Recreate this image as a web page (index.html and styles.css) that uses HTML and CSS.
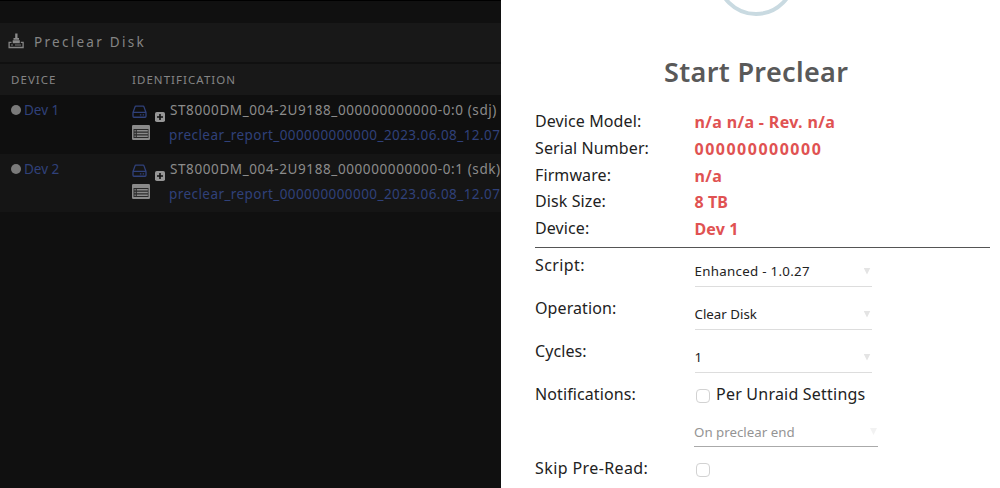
FILE: index.html
```html
<!DOCTYPE html>
<html lang="en">
<head>
<meta charset="utf-8">
<title>Preclear Disk</title>
<link rel="stylesheet" href="styles.css">
</head>
<body>
<svg class="defs" width="0" height="0">
  <symbol id="drive" viewBox="0 0 16 14"><path d="M4.200 1.200h7.600a1 1 0 0 1 1 .8L15 8v4.200a1 1 0 0 1-1 1H2a1 1 0 0 1-1-1V8L3.200 2a1 1 0 0 1 1-.8zM1 8h14" fill="none" stroke="currentColor" stroke-width="1.400" stroke-linejoin="round"/><path d="M8.400 10h1.600v1.300H8.400zM11.400 10H13v1.300h-1.600z" fill="currentColor"/></symbol>
  <symbol id="list" viewBox="0 0 18 15"><rect width="18" height="15" rx="1.200" fill="#8a8a8a"/><path d="M1.500 4h15v9h-15z" fill="#2a2a2a"/><path d="M2.500 5h1.200v1.400H2.500zM2.500 7.800h1.200v1.400H2.500zM2.500 10.600h1.200V12H2.500zM4.800 5h11v1.400h-11zM4.800 7.800h11v1.400h-11zM4.800 10.600h11V12h-11z" fill="#8a8a8a"/></symbol>
  <symbol id="plus" viewBox="0 0 10 10"><rect width="10" height="10" rx="1.800" fill="#969696"/><path d="M5 2v6M2 5h6" stroke="#111" stroke-width="1.600"/></symbol>
</svg>
<div class="page">
  <section class="disks">
    <h1 class="title">
      <svg class="title-icon" viewBox="0 0 16 16"><path d="M7.200.5h2.300v4.500H7.200zM5.500 5h5.500v1.800H5.500zM4.700 7.300h7.100v3H4.700z" fill="#8a8a8a"/><path d="M3.500 9.300H1.100v5.200h14V9.300h-2.300" fill="none" stroke="#858585" stroke-width="1.300"/><path d="M3 12h2M7 12h6" stroke="#777"/></svg>
      <span class="title-text">Preclear Disk</span>
    </h1>
    <div class="head"><span class="head-device">DEVICE</span><span class="head-id">IDENTIFICATION</span></div>
    <div class="disk">
      <div class="device"><i class="dot"></i><a class="dev-link">Dev 1</a></div>
      <div class="ident">
        <div class="line"><svg class="drive"><use href="#drive"/></svg><svg class="plus"><use href="#plus"/></svg><span class="serial">ST8000DM_004-2U9188_000000000000-0:0 (sdj)</span></div>
        <div class="line report-line"><svg class="list"><use href="#list"/></svg><a class="report">preclear_report_000000000000_2023.06.08_12.07</a></div>
      </div>
    </div>
    <div class="disk alt">
      <div class="device"><i class="dot"></i><a class="dev-link">Dev 2</a></div>
      <div class="ident">
        <div class="line"><svg class="drive"><use href="#drive"/></svg><svg class="plus"><use href="#plus"/></svg><span class="serial">ST8000DM_004-2U9188_000000000000-0:1 (sdk)</span></div>
        <div class="line report-line"><svg class="list"><use href="#list"/></svg><a class="report">preclear_report_000000000000_2023.06.08_12.07</a></div>
      </div>
    </div>
  </section>
  <section class="dialog">
    <svg class="ring" viewBox="0 0 84 16"><circle cx="42" cy="-24" r="38" fill="none" stroke="#c9dae1" stroke-width="4"/></svg>
    <h2 class="heading">Start Preclear</h2>
    <dl class="facts">
      <dt class="label">Device Model:</dt><dd class="fact">n/a n/a - Rev. n/a</dd>
      <dt class="label">Serial Number:</dt><dd class="fact fact-serial">000000000000</dd>
      <dt class="label">Firmware:</dt><dd class="fact">n/a</dd>
      <dt class="label">Disk Size:</dt><dd class="fact fact-short">8 TB</dd>
      <dt class="label">Device:</dt><dd class="fact fact-short">Dev 1</dd>
    </dl>
    <div class="form">
      <div class="field"><span class="label label-wide">Script:</span><div class="select"><span class="value value-script">Enhanced - 1.0.27</span><i class="arrow"></i></div></div>
      <div class="field"><span class="label">Operation:</span><div class="select"><span class="value">Clear Disk</span><i class="arrow"></i></div></div>
      <div class="field"><span class="label">Cycles:</span><div class="select"><span class="value">1</span><i class="arrow"></i></div></div>
      <div class="check-row"><span class="label">Notifications:</span><i class="box"></i><span class="label check-text">Per Unraid Settings</span></div>
      <div class="select disabled"><span class="value">On preclear end</span><i class="arrow"></i></div>
      <div class="check-row skip"><span class="label label-wide">Skip Pre-Read:</span><i class="box"></i></div>
    </div>
  </section>
</div>
</body>
</html>
```
FILE: styles.css
```css
* { box-sizing: border-box; }
body { margin: 0; font-family: "Noto Sans", sans-serif; background: #fff; }
.defs { position: absolute; }
.page { display: flex; width: 1000px; height: 488px; overflow: hidden; }
.disks { width: 501px; height: 488px; background: #101010; border-top: 1px solid #000; padding-top: 22px; overflow: hidden; white-space: nowrap; flex: none; }
.title { margin: 0; height: 39px; background: #181818; display: flex; align-items: center; padding: 0 0 2px 8px; color: #858585; font-size: 13.5px; font-weight: 400; letter-spacing: 2.28px; }
.title-icon { width: 16px; height: 16px; margin: -1px 10px 0 0; }
.head { height: 33px; border-top: 2px solid #101010; background: #181818; display: flex; align-items: center; padding: 0 0 1px 11px; font-size: 11.5px; letter-spacing: 1.05px; color: #858585; }
.head-device { width: 121px; }
.disk { height: 59px; background: #0f0f0f; display: flex; font-size: 13.5px; }
.disk.alt { height: 58px; background: #151515; }
.disk.alt .line:first-child, .disk.alt .device { height: 29px; }
.disk.alt .report-line { height: 22px; }
.device { width: 132px; height: 30px; padding-left: 11px; display: flex; align-items: center; gap: 3px; }
.dot { width: 10px; height: 10px; border-radius: 50%; background: #7a7a7a; }
.dev-link, .report { color: #30417a; }
.report { letter-spacing: 0.43px; }
.line { height: 30px; display: flex; align-items: center; }
.report-line { height: 20px; }
.drive { width: 15px; height: 13px; color: #30417a; margin: 3px 8px 0 0; }
.plus { width: 10px; height: 10px; margin: 14px 5px 0 0; }
.serial { color: #8c8c8c; letter-spacing: 0.6px; }
.list { width: 18px; height: 15px; margin: -5px 19px 0 0; }

.dialog { width: 499px; height: 488px; background: #fff; color: #222; overflow: hidden; padding: 0 10px 0 34px; }
.ring { display: block; width: 84px; height: 16px; margin-left: 179px; }
.heading { margin: 33px 0 0; height: 46px; line-height: 46px; padding-left: 129px; font-size: 27px; font-weight: 600; letter-spacing: 0.35px; color: #595959; }
.facts { margin: 13px 0 0; padding-bottom: 1px; display: grid; grid-template-columns: 159.5px 1fr; grid-auto-rows: 26.8px; height: 140px; border-bottom: 1.500px solid #555; align-items: start; }
.label { font-size: 16px; line-height: 26px; white-space: nowrap; letter-spacing: 0.1px; }
.label-wide { letter-spacing: 0.4px; }
.fact { margin: 1px 0 0; font-size: 16px; line-height: 26px; font-weight: 700; color: #e05252; white-space: nowrap; letter-spacing: 0.35px; }
.fact-serial { letter-spacing: 1.5px; }
.fact-short { letter-spacing: 0.1px; }
.form { padding-top: 4px; }
.field { height: 43px; display: grid; grid-template-columns: 159.5px 177px; align-items: start; }
.select { height: 35px; border-bottom: 1px solid #ddd; display: flex; align-items: center; justify-content: space-between; padding-top: 4px; }
.value { font-size: 13.3px; }
.value-script { letter-spacing: 0.3px; }
.arrow { width: 7px; height: 7px; background: #e4e4e4; clip-path: polygon(0 0, 100% 0, 50% 100%); margin-right: 1px; }
.check-row { height: 26px; display: grid; grid-template-columns: 160px 21px 1fr; align-items: center; }
.box { width: 14px; height: 14px; margin: 3px 0 0 1px; border: 1px solid #d2d2d2; border-radius: 4px; background: #fff; }
.check-text { letter-spacing: 0.22px; }
.disabled { width: 184px; height: 34px; margin: 6px 0 0 159px; border-color: #aaa; color: #949494; }
.disabled .arrow { background: #f2f2f2; }
.skip { margin-top: 8px; }
```
